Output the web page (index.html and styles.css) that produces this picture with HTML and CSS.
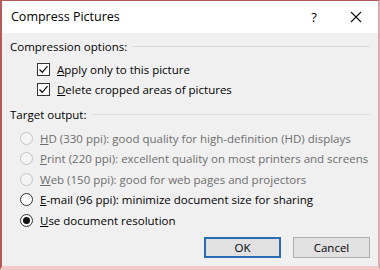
FILE: index.html
```html
<!DOCTYPE html>
<html>
<head>
<meta charset="utf-8">
<link rel="stylesheet" href="styles.css">
</head>
<body>
<div class="window">
  <div class="titlebar">
    <span class="title">Compress Pictures</span>
    <span class="help">?</span>
    <span class="close"><svg width="12" height="12" viewBox="0 0 12 12"><path d="M1 1 L11 11 M11 1 L1 11" stroke="#111" stroke-width="1.1" fill="none"/></svg></span>
  </div>
  <div class="content">
    <div class="group"><span>Compression options:</span><div class="rule"></div></div>
    <div class="list checks">
      <div class="row"><span class="box"><svg width="11" height="11" viewBox="0 0 11 11"><path d="M1.5 5.5 L4.3 8.3 L9.5 2.2" stroke="#111" stroke-width="1.3" fill="none"/></svg></span><span><u>A</u>pply only to this picture</span></div>
      <div class="row"><span class="box"><svg width="11" height="11" viewBox="0 0 11 11"><path d="M1.5 5.5 L4.3 8.3 L9.5 2.2" stroke="#111" stroke-width="1.3" fill="none"/></svg></span><span><u>D</u>elete cropped areas of pictures</span></div>
    </div>
    <div class="group g2"><span>Target output:</span><div class="rule"></div></div>
    <div class="list radios">
      <div class="row disabled"><span class="radio"></span><span><u>H</u>D (330 ppi): good quality for high-definition (HD) displays</span></div>
      <div class="row disabled"><span class="radio"></span><span><u>P</u>rint (220 ppi): excellent quality on most printers and screens</span></div>
      <div class="row disabled"><span class="radio"></span><span><u>W</u>eb (150 ppi): good for web pages and projectors</span></div>
      <div class="row"><span class="radio"></span><span><u>E</u>-mail (96 ppi): minimize document size for sharing</span></div>
      <div class="row"><span class="radio on"></span><span><u>U</u>se document resolution</span></div>
    </div>
    <div class="buttons">
      <button class="btn default">OK</button>
      <button class="btn">Cancel</button>
    </div>
  </div>
</div>
</body>
</html>
```
FILE: styles.css
```css
html, body { margin: 0; padding: 0; }
body {
  width: 380px; height: 270px; overflow: hidden;
  font-family: "Open Sans", "Noto Sans", sans-serif;
  font-size: 11.5px; color: #000;
}
.window {
  box-sizing: border-box;
  width: 380px; height: 270px;
  background: #f0f0f0;
  border-left: 2px solid #b35a5a;
  border-top: 1px solid #b35a5a;
  border-right: 2px solid #d9a9a9;
  border-bottom: 4px solid #f2c9c9;
  display: flex; flex-direction: column;
}
.titlebar {
  height: 32px; background: #fff;
  display: flex; align-items: center;
  padding-left: 9px; padding-bottom: 1px; box-sizing: border-box;
  font-size: 12.5px;
}
.title { flex: 1; }
.help { width: 20px; text-align: center; margin-right: 26px; font-size: 13px; }
.close { width: 12px; margin-right: 16px; display: flex; }
.content { padding: 4px 8px 0 8px; flex: 1; display: flex; flex-direction: column; }
.group { display: flex; align-items: center; gap: 5px; height: 18px; }
.group .rule { flex: 1; border-top: 1px solid #dcdcdc; margin-top: 1px; }
.g2 { margin-top: 9px; }
.list { display: flex; flex-direction: column; }
.checks { padding-left: 27px; gap: 6px; margin-top: 7px; }
.checks .row { display: flex; align-items: center; gap: 7px; height: 14px; }
.box {
  box-sizing: border-box; width: 13px; height: 13px;
  border: 1px solid #333; background: #fff;
  display: flex; align-items: center; justify-content: center;
}
.radios { padding-left: 10px; margin-top: 5px; }
.radios .row { display: flex; align-items: center; gap: 7px; height: 20.5px; }
.radio {
  box-sizing: border-box; width: 13px; height: 13px; border-radius: 50%;
  border: 1px solid #333; background: #fff;
  display: flex; align-items: center; justify-content: center;
}
.radio.on::after { content: ""; width: 7px; height: 7px; border-radius: 50%; background: #111; }
.disabled { color: #6d6d6d; }
.disabled .radio { border-color: #c4c4c4; background: #f4f4f4; }
.buttons { display: flex; justify-content: flex-end; gap: 12px; margin-top: 6px; padding-right: 0; }
.btn {
  box-sizing: border-box; width: 77px; height: 21px;
  background: #e1e1e1; border: 1px solid #adadad;
  font-family: inherit; font-size: 11.5px; color: #000; padding: 0;
}
.btn.default { border: 2px solid #2a6bb5; }
```
